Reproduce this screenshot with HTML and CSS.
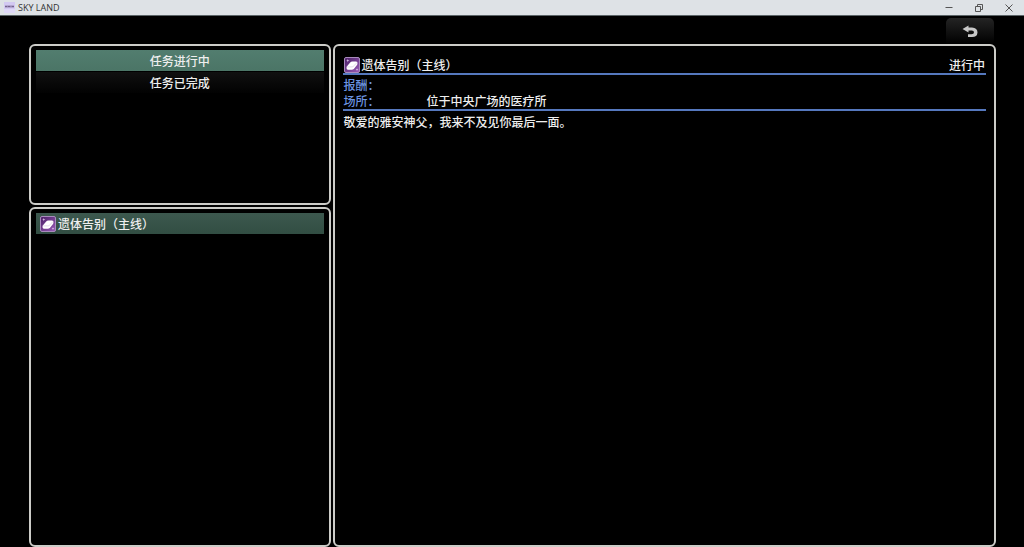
FILE: index.html
```html
<!DOCTYPE html>
<html lang="zh-CN">
<head>
  <meta charset="utf-8">
  <title>SKY LAND</title>
  <link rel="stylesheet" href="styles.css">
</head>
<body>
  <svg class="defs" width="0" height="0" aria-hidden="true">
    <defs>
      <linearGradient id="gem" x1="0" y1="0" x2="1" y2="1">
        <stop offset="0" stop-color="#4a1f66"/>
        <stop offset="1" stop-color="#9a5cb8"/>
      </linearGradient>
      <symbol id="questIcon" viewBox="0 0 16 16">
        <rect x="0.5" y="0.5" width="15" height="15" rx="1.5" fill="url(#gem)" stroke="#a98bbd"/>
        <path d="M2.6 9.8L6.2 5.6Q7 4.6 8.4 4.6H12Q13.6 4.6 13.5 6.2L13.2 7.8L9.8 12Q9 12.8 7.8 12.8H4Q2.2 12.8 2.6 9.8Z" fill="#fff"/>
        <path d="M3.2 9.9H8.8L12.9 5.6" fill="none" stroke="#c9b3d6" stroke-width="0.5"/>
        <path d="M3.8 2L4.2 3.2L5.4 3.6L4.2 4L3.8 5.2L3.4 4L2.2 3.6L3.4 3.2ZM13 11.2L13.4 12.2L14.4 12.6L13.4 13L13 14L12.6 13L11.6 12.6L12.6 12.2Z" fill="#e3ccef"/>
      </symbol>
    </defs>
  </svg>

  <header class="titlebar">
    <svg class="app-icon" width="11" height="11" viewBox="0 0 11 11" aria-hidden="true">
      <rect width="11" height="11" fill="#d3c9f2"/>
      <rect y="7" width="11" height="4" fill="#ded8f6"/>
      <path d="M1 4.5H10" stroke="#9586b0" stroke-width="2"/>
      <path d="M1 4.5H3M4 4.5H6M8 4.5H10" stroke="#75638f" stroke-width="1"/>
    </svg>
    <span class="app-name">SKY LAND</span>
    <div class="window-buttons">
      <button aria-label="Minimize">
        <svg width="10" height="10" viewBox="0 0 10 10"><path d="M1.5 4.5H8.5"/></svg>
      </button>
      <button aria-label="Restore">
        <svg width="10" height="10" viewBox="0 0 10 10"><path d="M1.5 3.5H6.5V8.5H1.5ZM3.5 3.5V1.5H8.5V6.5H6.5"/></svg>
      </button>
      <button aria-label="Close">
        <svg width="10" height="10" viewBox="0 0 10 10"><path d="M1.5 1.5L8.5 8.5M8.5 1.5L1.5 8.5"/></svg>
      </button>
    </div>
  </header>

  <div class="toolbar">
    <button class="back" aria-label="返回">
      <svg width="16" height="13" viewBox="0 0 16 13"><path d="M0.5 4L6.5 0.5V2.4H10Q15.5 2.8 15.5 7.4Q15.2 12 10 12H6V9.2H9.5Q12 9.2 12 7.3Q12 5.6 9.8 5.6H6.5V7.6Z"/></svg>
    </button>
  </div>

  <main class="quests">
    <div class="side">
      <nav class="window categories">
        <button class="category active">任务进行中</button>
        <button class="category">任务已完成</button>
      </nav>
      <section class="window list">
        <button class="quest">
          <svg class="quest-icon"><use href="#questIcon"/></svg>
          <span>遗体告别（主线）</span>
        </button>
      </section>
    </div>

    <article class="window detail">
      <header class="detail-head">
        <svg class="quest-icon"><use href="#questIcon"/></svg>
        <h1>遗体告别（主线）</h1>
        <span class="status">进行中</span>
      </header>
      <dl class="info">
        <dt>报酬：</dt>
        <dd></dd>
        <dt>场所：</dt>
        <dd>位于中央广场的医疗所</dd>
      </dl>
      <p class="description">敬爱的雅安神父，我来不及见你最后一面。</p>
    </article>
  </main>
</body>
</html>
```
FILE: styles.css
```css
* {
  box-sizing: border-box;
}

body {
  margin: 0;
  height: 100vh;
  display: flex;
  flex-direction: column;
  background-color: #000;
  color: #eee;
  font-family: "Noto Sans CJK SC", sans-serif;
  font-size: 12px;
  font-weight: 500;
  line-height: 16px;
}

button {
  margin: 0;
  padding: 0;
  border: none;
  background: none;
  color: inherit;
  font: inherit;
  cursor: pointer;
}

.defs {
  position: absolute;
}

/* window title bar */
.titlebar {
  display: flex;
  align-items: center;
  height: 16px;
  padding-left: 4px;
  background-color: #dee2e6;
  border-bottom: 1px solid #5b6467;
  color: #333;
}

.app-name {
  margin-left: 3px;
  font-family: "Open Sans", sans-serif;
  font-size: 9px;
  font-weight: normal;
  line-height: 14px;
}

.window-buttons {
  display: flex;
  margin-left: auto;
}

.window-buttons button {
  display: flex;
  align-items: center;
  justify-content: center;
  width: 30px;
  height: 14px;
}

.window-buttons path {
  fill: none;
  stroke: #555;
}

/* back button */
.toolbar {
  display: flex;
  justify-content: flex-end;
  height: 28px;
  padding: 2px 30px 0 0;
}

.back {
  display: flex;
  align-items: center;
  justify-content: center;
  width: 48px;
  height: 26px;
  border-radius: 5px 5px 0 0;
  background: linear-gradient(#242424, #000);
}

.back path {
  fill: #c8c8c8;
}

/* quest windows */
.quests {
  flex: 1;
  display: grid;
  grid-template-columns: 5fr 11fr;
  gap: 2px;
  padding: 0 28px 0 29px;
}

.side {
  display: flex;
  flex-direction: column;
  gap: 2px;
}

.window {
  border: 2px solid #ccccc8;
  border-radius: 6px;
  padding: 4px 5px;
}

.categories {
  display: flex;
  flex-direction: column;
  gap: 1px;
  min-height: 161px;
}

.category {
  height: 21px;
  background: linear-gradient(#101010, #020202);
}

.category.active {
  background: linear-gradient(#527d6f, #4b7566);
}

.list {
  flex: 1;
}

.quest {
  display: flex;
  align-items: center;
  gap: 2px;
  width: 100%;
  height: 21px;
  padding-left: 4px;
  background: linear-gradient(#3c584e, #324e43);
}

.quest-icon {
  flex: none;
  width: 16px;
  height: 16px;
}

.detail {
  padding: 10px 8px;
}

.detail-head {
  display: flex;
  align-items: center;
  gap: 2px;
  height: 19px;
  padding: 0 1px;
  border-bottom: 2px solid #5578be;
}

.detail-head h1 {
  margin: 0;
  font-size: 12px;
  font-weight: 500;
}

.status {
  margin-left: auto;
}

.info {
  display: grid;
  grid-template-columns: 83px 1fr;
  grid-auto-rows: 16px;
  margin: 0;
  padding: 2px 1px 0;
  border-bottom: 2px solid #5578be;
}

.info dt {
  color: #6c94e0;
}

.info dd {
  margin: 0;
}

.description {
  margin: 3px 1px 0;
}
```
